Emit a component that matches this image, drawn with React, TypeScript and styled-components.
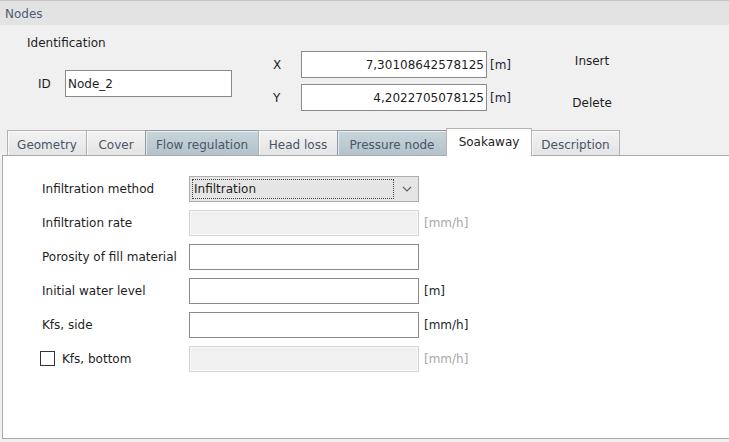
import React from "react";
import styled, { createGlobalStyle } from "styled-components";

const GlobalStyle = createGlobalStyle`
    html, body {
        margin: 0;
        padding: 0;
        width: 729px;
        height: 442px;
        overflow: hidden;
        background: #f0f0f0;
        font-family: "DejaVu Sans", "Liberation Sans", sans-serif;
        font-size: 12px;
        color: #1e1e1e;
    }
    * {
        box-sizing: border-box;
    }
`;

const TABS = [
    { title: "Geometry", width: 80, dark: false },
    { title: "Cover", width: 60, dark: false },
    { title: "Flow regulation", width: 114, dark: true },
    { title: "Head loss", width: 80, dark: false },
    { title: "Pressure node", width: 110, dark: true },
    { title: "Soakaway", width: 86, dark: false },
    { title: "Description", width: 89, dark: false },
];

const ACTIVE_TAB = "Soakaway";

const Chevron = () => (
    <svg width="10" height="6" viewBox="0 0 10 6">
        <path d="M1 1 L5 5 L9 1" fill="none" stroke="#606060" strokeWidth="1.1" />
    </svg>
);

export default function App() {
    return (
        <>
            <GlobalStyle />
            <Window>
                <TitleBar>Nodes</TitleBar>
                <TopSection>
                    <IdentGroup>
                        <GroupTitle>Identification</GroupTitle>
                        <IdRow>
                            <IdLabel>ID</IdLabel>
                            <TextBox $width={167} $height={27} defaultValue="Node_2" readOnly />
                        </IdRow>
                    </IdentGroup>
                    <CoordGroup>
                        <CoordRow>
                            <CoordLabel>X</CoordLabel>
                            <TextBox $width={186} $height={27} $right defaultValue="7,30108642578125" readOnly />
                            <Unit>[m]</Unit>
                        </CoordRow>
                        <CoordRow>
                            <CoordLabel>Y</CoordLabel>
                            <TextBox $width={186} $height={27} $right defaultValue="4,2022705078125" readOnly />
                            <Unit>[m]</Unit>
                        </CoordRow>
                    </CoordGroup>
                    <ActionGroup>
                        <FlatButton>Insert</FlatButton>
                        <FlatButton>Delete</FlatButton>
                    </ActionGroup>
                </TopSection>
                <TabStrip>
                    {TABS.map((t) => (
                        <Tab key={t.title} $width={t.width} $dark={t.dark} $active={t.title === ACTIVE_TAB}>
                            {t.title}
                        </Tab>
                    ))}
                </TabStrip>
                <Panel>
                    <Form>
                        <FieldLabel>Infiltration method</FieldLabel>
                        <ComboBox>
                            <FocusText>Infiltration</FocusText>
                            <ChevronBox>
                                <Chevron />
                            </ChevronBox>
                        </ComboBox>
                        <span />

                        <FieldLabel>Infiltration rate</FieldLabel>
                        <TextBox $width={230} $height={26} disabled />
                        <Unit $disabled>[mm/h]</Unit>

                        <FieldLabel>Porosity of fill material</FieldLabel>
                        <TextBox $width={230} $height={26} readOnly />
                        <span />

                        <FieldLabel>Initial water level</FieldLabel>
                        <TextBox $width={230} $height={26} readOnly />
                        <Unit>[m]</Unit>

                        <FieldLabel>Kfs, side</FieldLabel>
                        <TextBox $width={230} $height={26} readOnly />
                        <Unit>[mm/h]</Unit>

                        <CheckLabel>
                            <CheckBox />
                            Kfs, bottom
                        </CheckLabel>
                        <TextBox $width={230} $height={26} disabled />
                        <Unit $disabled>[mm/h]</Unit>
                    </Form>
                </Panel>
            </Window>
        </>
    );
}

const Window = styled.div`
    width: 729px;
    height: 442px;
    display: flex;
    flex-direction: column;
    background: #f0f0f0;
`;

const TitleBar = styled.div`
    height: 25px;
    border-top: 1px solid #c4c4c4;
    background: #e3e3e3;
    color: #4d5c74;
    padding: 1px 0 0 5px;
    display: flex;
    align-items: center;
    line-height: 16px;
`;

const TopSection = styled.div`
    height: 103px;
    display: flex;
    padding-left: 27px;
`;

const IdentGroup = styled.div`
    width: 205px;
    display: flex;
    flex-direction: column;
    padding-top: 10px;
`;

const GroupTitle = styled.div`
    line-height: 16px;
    height: 16px;
`;

const IdRow = styled.div`
    display: flex;
    align-items: center;
    margin-top: 19px;
    margin-left: 11px;
`;

const IdLabel = styled.span`
    width: 27px;
`;

const TextBox = styled.input<{ $width: number; $height: number; $right?: boolean }>`
    width: ${(p) => p.$width}px;
    height: ${(p) => p.$height}px;
    border: 1px solid #8a8a8a;
    background: #ffffff;
    padding: 0 2px;
    margin: 0;
    font: inherit;
    color: #1e1e1e;
    text-align: ${(p) => (p.$right ? "right" : "left")};
    outline: none;

    &:disabled {
        background: #f0f0f0;
        border-color: #d6d6d6;
        box-shadow: inset 0 0 0 1px #f7f7f7;
    }
`;

const CoordGroup = styled.div`
    margin-left: 41px;
    padding-top: 26px;
    display: flex;
    flex-direction: column;
    gap: 6px;
`;

const CoordRow = styled.div`
    display: flex;
    align-items: center;
`;

const CoordLabel = styled.span`
    width: 28px;
`;

const Unit = styled.span<{ $disabled?: boolean }>`
    margin-left: 3px;
    color: ${(p) => (p.$disabled ? "#a8a8a8" : "#1c2535")};
    align-self: center;
`;

const ActionGroup = styled.div`
    margin-left: 46px;
    padding-top: 22px;
    display: flex;
    flex-direction: column;
    gap: 14px;
`;

const FlatButton = styled.div`
    width: 70px;
    height: 28px;
    display: flex;
    align-items: center;
    justify-content: center;
    color: #1e1e1e;
`;

const TabStrip = styled.div`
    height: 27px;
    display: flex;
    align-items: flex-end;
    padding-left: 8px;
`;

const Tab = styled.div<{ $width: number; $dark: boolean; $active: boolean }>`
    width: ${(p) => p.$width}px;
    height: ${(p) => (p.$active ? 28 : 25)}px;
    margin-left: -1px;
    margin-bottom: ${(p) => (p.$active ? -1 : 0)}px;
    display: flex;
    align-items: center;
    justify-content: center;
    padding-top: ${(p) => (p.$active ? 0 : 3)}px;
    padding-bottom: ${(p) => (p.$active ? 2 : 0)}px;
    border: 1px solid ${(p) => (p.$active ? "#b4b4b4" : p.$dark ? "#8b9aa3" : "#b2b2b2")};
    border-bottom: ${(p) => (p.$active ? "none" : "0")};
    background: ${(p) =>
        p.$active
            ? "#ffffff"
            : p.$dark
            ? "linear-gradient(#c8d4da, #b3c3cb)"
            : "linear-gradient(#f2f2f2, #e4e4e4)"};
    color: ${(p) => (p.$active ? "#1e1e1e" : "#4a5566")};
    position: relative;
    z-index: ${(p) => (p.$active ? 1 : 0)};
    box-shadow: ${(p) => (p.$active ? "none" : "inset 1px 1px 0 rgba(255,255,255,0.6)")};
`;

const Panel = styled.div`
    margin-left: 2px;
    height: 284px;
    background: #ffffff;
    border: 1px solid #a9a9a9;
    border-right: none;
    padding: 20px 0 0 39px;
`;

const Form = styled.div`
    display: grid;
    grid-template-columns: 147px 230px auto;
    grid-auto-rows: 26px;
    row-gap: 8px;
    align-items: center;

    & > ${Unit} {
        margin-left: 5px;
    }
`;

const FieldLabel = styled.span`
    color: #1e1e1e;
`;

const CheckLabel = styled.label`
    display: flex;
    align-items: center;
    gap: 7px;
    margin-left: -2px;
`;

const CheckBox = styled.span`
    width: 15px;
    height: 15px;
    margin-top: -2px;
    border: 1px solid #333333;
    background: #ffffff;
`;

const ComboBox = styled.div`
    width: 230px;
    height: 26px;
    border: 1px solid #adadad;
    background: #e5e5e5;
    display: flex;
    align-items: center;
    padding: 0 2px;
`;

const FocusText = styled.div`
    flex: 1;
    height: 20px;
    border: 1px dotted #444444;
    display: flex;
    align-items: center;
    padding-left: 1px;
    margin-right: 4px;
`;

const ChevronBox = styled.div`
    width: 18px;
    display: flex;
    align-items: center;
    justify-content: center;
`;
